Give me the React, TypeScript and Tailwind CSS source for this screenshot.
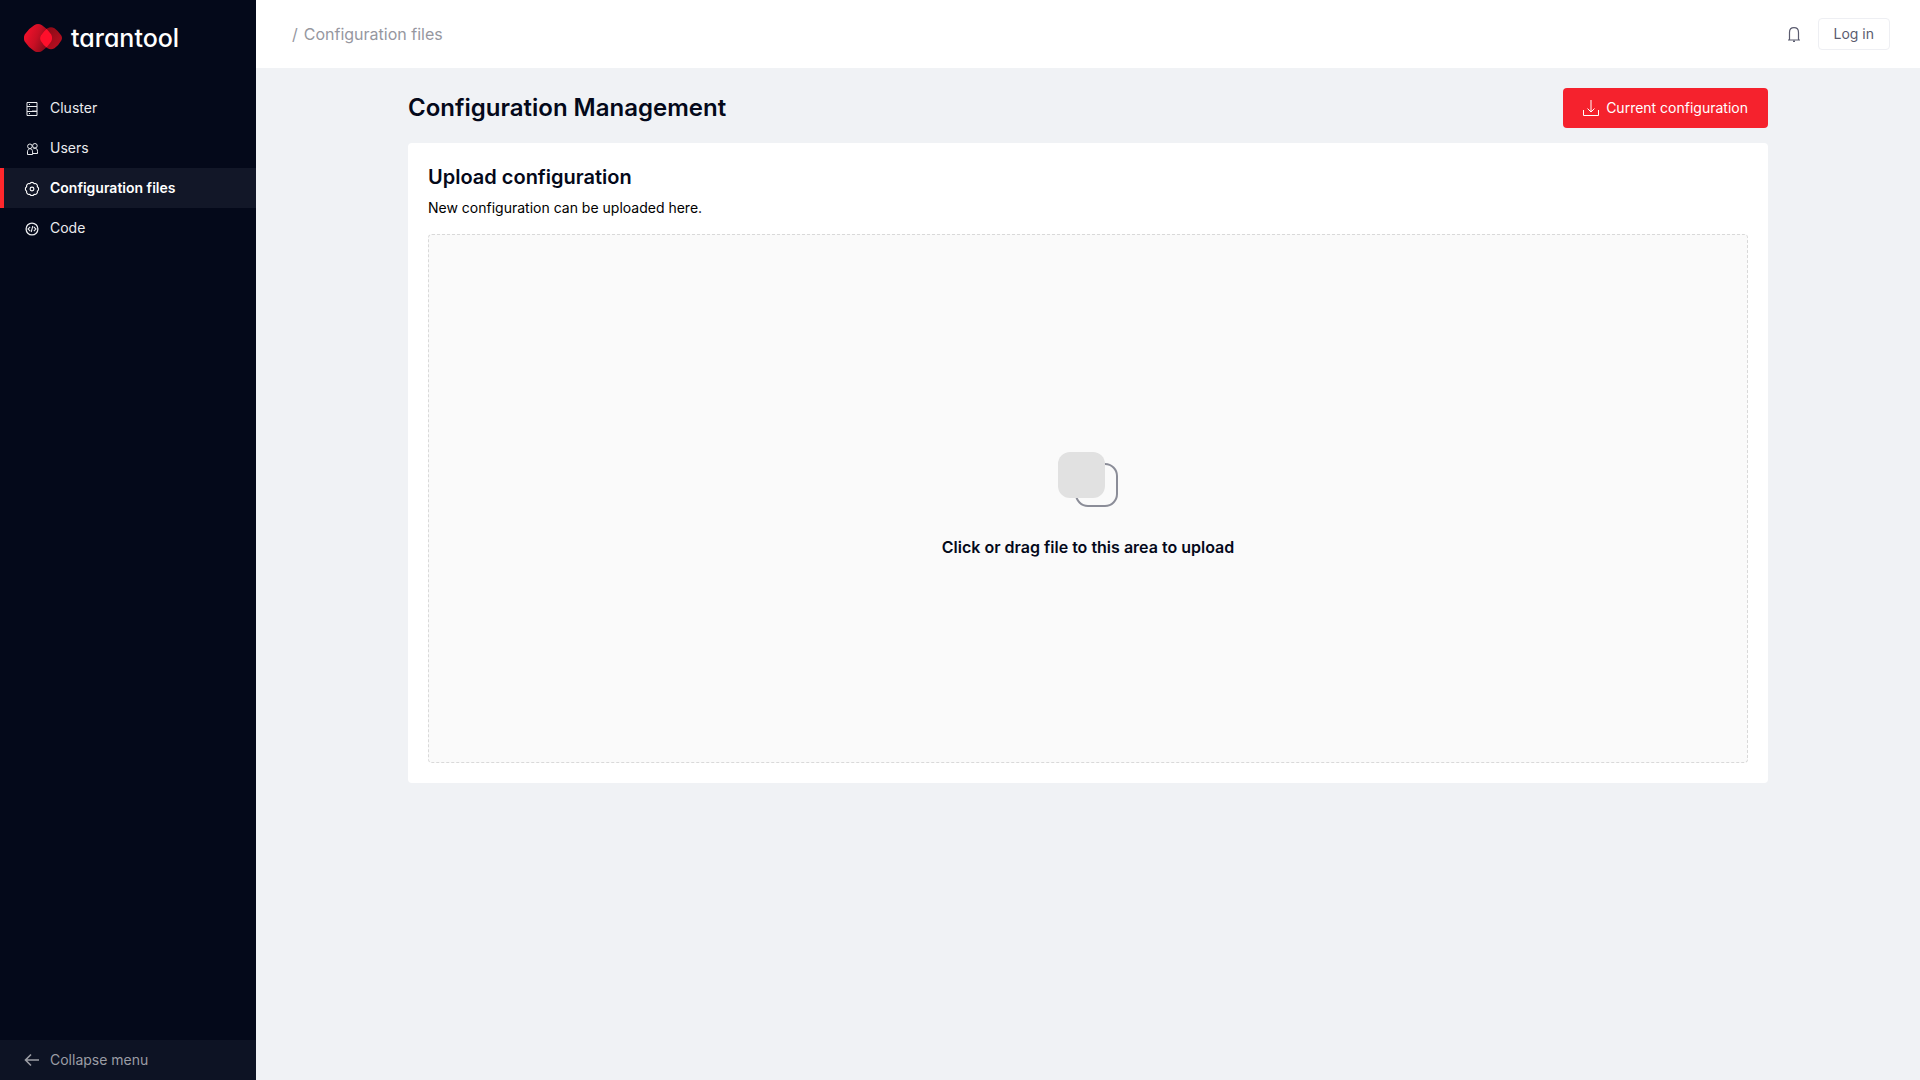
import type { ReactNode } from "react";

const Svg = ({ children, size = 16 }: { children: ReactNode; size?: number }) => (
  <svg width={size} height={size} viewBox={`0 0 ${size} ${size}`} fill="none" stroke="currentColor" aria-hidden="true" className="shrink-0">
    {children}
  </svg>
);

const ClusterIcon = () => (
  <Svg>
    <path d="M3 2.500h10v13H3zM3 6.500h10M3 11.500h10" />
    <path d="M5 4.500h1M5 9h1M5 13.500h1" />
    <path d="M8 10.500h5" strokeOpacity=".4" />
  </Svg>
);

const UsersIcon = () => (
  <Svg>
    <circle cx="5.900" cy="6.300" r="2.300" />
    <circle cx="10.900" cy="5.800" r="2.300" />
    <path d="M3.500 14.500v-2.600c0-1.900 1-3.200 2.500-3.200s2.600 1.300 2.600 3.200v2.600zM9 9.300c.5-.8 1.200-1.200 2-1.200 1.500 0 2.500 1.300 2.500 3.200v2.200H8.800" />
  </Svg>
);

const GearIcon = () => (
  <Svg>
    <path
      strokeWidth="1.100"
      strokeLinejoin="round"
      d="M13.260 11.180A2.400 2.400 0 0 1 10.180 14.260A2.400 2.400 0 0 1 5.820 14.260A2.400 2.400 0 0 1 2.740 11.180A2.400 2.400 0 0 1 2.740 6.820A2.400 2.400 0 0 1 5.820 3.740A2.400 2.400 0 0 1 10.180 3.740A2.400 2.400 0 0 1 13.260 6.820A2.400 2.400 0 0 1 13.260 11.180z"
    />
    <circle cx="8" cy="9" r="1.900" strokeWidth="1.100" />
  </Svg>
);

const CodeIcon = () => (
  <Svg>
    <circle cx="8" cy="9" r="5.900" strokeWidth="1.300" />
    <path d="M6.200 6.800L4 9l2.200 2.200M9.800 6.800L12 9l-2.200 2.200M8.800 6l-1.600 6" strokeWidth="1.100" />
  </Svg>
);

const items = [
  { label: "Cluster", icon: <ClusterIcon /> },
  { label: "Users", icon: <UsersIcon /> },
  { label: "Configuration files", icon: <GearIcon />, active: true },
  { label: "Code", icon: <CodeIcon /> },
];

const Logo = () => (
  <svg width="38" height="28" viewBox="0 0 38 28" aria-hidden="true" className="shrink-0">
    <defs>
      <linearGradient id="left" x1="0" y1=".3" x2="1" y2=".7">
        <stop offset="0" stopColor="#f5112b" />
        <stop offset=".45" stopColor="#c90f24" />
        <stop offset="1" stopColor="#6e0a17" />
      </linearGradient>
      <linearGradient id="right" x1="0" y1="0" x2="1" y2="1">
        <stop offset="0" stopColor="#7d0914" />
        <stop offset=".6" stopColor="#a50d1c" />
        <stop offset="1" stopColor="#c00e22" />
      </linearGradient>
      <clipPath id="lens">
        <path d="M10.200 1.200Q14 -1.200 18 1.200Q23.500 4.500 27.200 10.500Q29 14 27.200 17.500Q23.500 23.500 18 27Q14 29.200 10.200 27Q4.500 23.500.7 17.500Q-.9 14 .7 10.500Q4.500 4.500 10.200 1.200z" />
      </clipPath>
    </defs>
    <path fill="url(#left)" d="M10.200 1.200Q14 -1.200 18 1.200Q23.500 4.500 27.200 10.500Q29 14 27.200 17.500Q23.500 23.500 18 27Q14 29.200 10.200 27Q4.500 23.500.7 17.500Q-.9 14 .7 10.500Q4.500 4.500 10.200 1.200z" />
    <path fill="url(#right)" d="M23.500 4.200Q27 2.200 30.500 4.200Q34.500 7 37.300 11.500Q38.700 14 37.300 16.500Q34.500 21.500 30.500 24.300Q27 26.200 23.500 24.300Q19.500 21.500 16.800 17Q15.400 14 16.800 11.500Q19.500 7 23.500 4.200z" />
    <path clipPath="url(#lens)" fill="#ff0f2b" d="M23.500 4.200Q27 2.200 30.500 4.200Q34.500 7 37.300 11.500Q38.700 14 37.300 16.500Q34.500 21.500 30.500 24.300Q27 26.200 23.500 24.300Q19.500 21.500 16.800 17Q15.400 14 16.800 11.500Q19.500 7 23.500 4.200z" />
  </svg>
);

function Sidebar() {
  return (
    <aside className="flex w-64 shrink-0 flex-col bg-[#04091a] text-white">
      <a href="#" className="flex h-[76px] items-center gap-[9px] pl-6">
        <Logo />
        <span className="text-[25px] leading-8 font-medium [font-feature-settings:'cv11']">tarantool</span>
      </a>
      <nav className="mt-3 flex flex-col">
        {items.map((item) => (
          <a
            key={item.label}
            href="#"
            aria-current={item.active ? "page" : undefined}
            className={
              item.active
                ? "flex h-10 items-center gap-2.5 border-l-4 border-[#ff272c] bg-[#121728] pl-5 text-sm font-semibold"
                : "flex h-10 items-center gap-2.5 border-l-4 border-transparent pl-5 text-sm text-[#eaebee]"
            }
          >
            {item.icon}
            {item.label}
          </a>
        ))}
      </nav>
      <button type="button" className="mt-auto flex h-10 items-center gap-2.5 bg-[#0d1324] pl-6 text-sm text-[#9b9da4]">
        <Svg>
          <path d="M15 8H1.500M7 2.500L1.500 8 7 13.500" strokeWidth="1.600" />
        </Svg>
        Collapse menu
      </button>
    </aside>
  );
}

function Header() {
  return (
    <header className="flex h-[68px] items-center bg-white pr-[30px] pl-9">
      <nav aria-label="Breadcrumb" className="flex gap-1.5 text-base text-[#96979f]">
        <span>/</span>
        <span>Configuration files</span>
      </nav>
      <button type="button" aria-label="Notifications" className="mr-4 ml-auto text-[#5b5c6f]">
        <Svg>
          <path d="M3.500 14V6.500C3.500 3.500 5.300 1.700 8 1.700s4.500 1.800 4.500 4.800V14M2 14h12" strokeWidth="1.200" />
          <path d="M7 15.200h2" strokeWidth="1.600" />
        </Svg>
      </button>
      <button type="button" className="h-8 rounded border border-[#eeeff3] px-[15px] text-sm text-[#5b5c6f]">
        Log in
      </button>
    </header>
  );
}

export default function App() {
  return (
    <div className="flex min-h-screen bg-[#f0f2f5] font-['Inter',sans-serif] text-[#04091a]">
      <Sidebar />
      <div className="flex min-w-0 flex-1 flex-col">
        <Header />
        <main className="mx-auto w-full max-w-[1360px] pt-5">
          <div className="flex items-center justify-between">
            <h1 className="text-2xl font-semibold">Configuration Management</h1>
            <button type="button" className="flex h-10 items-center gap-[7px] rounded bg-[#f5222d] px-5 text-sm text-white">
              <Svg>
                <path d="M.5 10v5.500h15V10M8 0v12M4.500 8.500L8 12l3.500-3.500" />
              </Svg>
              Current configuration
            </button>
          </div>
          <section className="mt-[15px] rounded bg-white p-5">
            <h2 className="text-xl leading-7 font-semibold">Upload configuration</h2>
            <p className="mt-[5px] text-sm leading-6 text-black">New configuration can be uploaded here.</p>
            <label className="mt-3.5 flex h-[529px] cursor-pointer flex-col items-center justify-center rounded-sm border border-dashed border-[#d9d9d9] bg-[#fafafa] pt-3.5">
              <input type="file" className="sr-only" />
              <svg width="60" height="55" viewBox="0 0 60 55" fill="none" aria-hidden="true">
                <rect x="18" y="12" width="41" height="42" rx="12" stroke="#8b8d98" strokeWidth="2" />
                <rect width="47" height="46" rx="12" fill="#e1e1e1" />
              </svg>
              <span className="mt-7 text-base font-semibold">Click or drag file to this area to upload</span>
            </label>
          </section>
        </main>
      </div>
    </div>
  );
}
